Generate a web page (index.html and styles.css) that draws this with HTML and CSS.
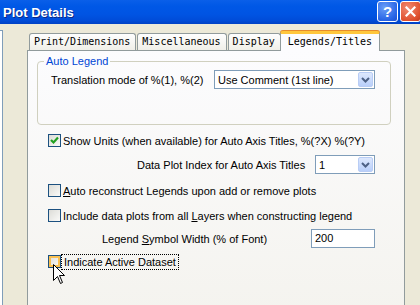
FILE: index.html
```html
<!DOCTYPE html>
<html lang="en">
<head>
  <meta charset="UTF-8" />
  <title>Plot Details</title>
  <link rel="stylesheet" href="styles.css">
</head>
<body>
  <div class="titlebar">
    <span class="title">Plot Details</span>
    <div class="caption-buttons">
      <span class="cap-btn help">?</span>
      <span class="cap-btn close">
        <svg width="11" height="11" viewBox="0 0 11 11"><path d="M1.5 1.5 L9.5 9.5 M9.5 1.5 L1.5 9.5" stroke="#fff" stroke-width="2.2" stroke-linecap="square"/></svg>
      </span>
    </div>
  </div>

  <div class="client">
    <div class="tree"></div>

    <div class="tabbox">
      <div class="tabs">
        <span class="tab">Print/Dimensions</span>
        <span class="tab">Miscellaneous</span>
        <span class="tab">Display</span>
        <span class="tab active">Legends/Titles</span>
      </div>

      <div class="panel">
        <fieldset class="group">
          <legend>Auto Legend</legend>
          <div class="group-row">
            <span>Translation mode of %(1), %(2)</span>
            <div class="combo wide">
              <span class="combo-text">Use Comment (1st line)</span>
              <span class="drop"><svg width="9" height="6" viewBox="0 0 9 6"><path d="M1 1 L4.5 4.5 L8 1" stroke="#4d6185" stroke-width="2" fill="none"/></svg></span>
            </div>
          </div>
        </fieldset>

        <div class="check first">
          <span class="box"><svg width="11" height="11" viewBox="0 0 11 11"><path d="M2 5 L4.5 7.5 L9 2.5" stroke="#21a121" stroke-width="2.2" fill="none"/></svg></span>
          <span>Show Units (when available) for Auto Axis Titles, %(?X) %(?Y)</span>
        </div>

        <div class="field plot-index">
          <span>Data Plot Index for Auto Axis Titles</span>
          <div class="combo small">
            <span class="combo-text">1</span>
            <span class="drop"><svg width="9" height="6" viewBox="0 0 9 6"><path d="M1 1 L4.5 4.5 L8 1" stroke="#4d6185" stroke-width="2" fill="none"/></svg></span>
          </div>
        </div>

        <div class="check reconstruct">
          <span class="box"></span>
          <span><u>A</u>uto reconstruct Legends upon add or remove plots</span>
        </div>

        <div class="check include">
          <span class="box"></span>
          <span>Include data plots from all <u>L</u>ayers when constructing legend</span>
        </div>

        <div class="field symbol-width">
          <span>Legend <u>S</u>ymbol Width (% of Font)</span>
          <div class="edit">200</div>
        </div>

        <div class="check indicate">
          <span class="box hot"></span>
          <span class="focus">Indicate Active Dataset</span>
          <svg class="cursor" width="13" height="21" viewBox="0 0 13 21"><path d="M0.5 0.5 L0.5 16.5 L4.5 12.5 L7.5 19.5 L9.5 18.5 L6.5 11.5 L11.5 11.5 Z" fill="#fff" stroke="#000" stroke-width="1"/></svg>
        </div>
      </div>
    </div>
  </div>
</body>
</html>
```

FILE: styles.css
```css
body {
  margin: 0;
  width: 420px;
  height: 305px;
  overflow: hidden;
  background: #ece9d8;
  font-family: "Liberation Sans", Arial, sans-serif;
  font-size: 11px;
  color: #000;
}
.titlebar {
  height: 24px;
  display: flex;
  align-items: center;
  justify-content: space-between;
  padding-left: 3px;
  background: linear-gradient(#0a5fe9 0%, #0058e6 25%, #0054e3 60%, #004cd8 85%, #0041c4 100%);
}
.title {
  color: #fff;
  font-weight: bold;
  font-size: 13px;
  margin-top: 1px;
  text-shadow: 1px 1px 0 #0a2a8a;
}
.caption-buttons {
  display: flex;
  gap: 2px;
  margin-right: -1px;
  margin-top: -2px;
}
.cap-btn {
  width: 19px;
  height: 19px;
  border: 1px solid #fff;
  border-radius: 3px;
  display: flex;
  align-items: center;
  justify-content: center;
  color: #fff;
  font-weight: bold;
  font-size: 15px;
}
.help {
  background: radial-gradient(circle at 35% 30%, #6b9ff7, #2764e6 70%, #1c50d0);
}
.close {
  background: radial-gradient(circle at 35% 30%, #f08a72, #e0512f 70%, #c23a1c);
}

.client {
  display: flex;
}
.tree {
  width: 2px;
  height: 290px;
  margin-top: 6px;
  background: #fff;
  border-top: 1px solid #7f9db9;
  border-right: 1px solid #7f9db9;
}
.tabbox {
  margin-left: 24px;
  margin-top: 7px;
}
.tabs {
  display: flex;
  align-items: flex-end;
  gap: 1px;
  margin-left: 2px;
  font-family: "DejaVu Sans Mono", monospace;
  font-size: 10px;
}
.tab {
  line-height: 16px;
  padding: 0 5px 0 4px;
  border: 1px solid #919b9c;
  border-bottom: none;
  border-radius: 3px 3px 0 0;
  background: linear-gradient(#fefefe, #f0efe8);
}
.tab.active {
  position: relative;
  z-index: 1;
  margin-left: -2px;
  margin-bottom: -1px;
  padding: 0 7px 1px 7px;
  border-top: 3px solid #ffc73c;
  box-shadow: 0 -1px 0 #e68b2c;
  background: #fcfcfe;
}

.panel {
  width: 376px;
  height: 270px;
  border: 1px solid #919b9c;
  background: linear-gradient(#fcfcfe, #f4f3ee);
  overflow: hidden;
}
.group {
  margin: 4px 13px 0 9px;
  padding: 0 0 0 6px;
  border: 1px solid #d0d0bf;
  border-radius: 4px;
}
.group legend {
  padding: 0 2px;
  color: #0046d5;
  line-height: 13px;
}
.group-row {
  display: flex;
  align-items: center;
  padding: 2px 15px 35px 7px;
}
.combo {
  height: 17px;
  border: 1px solid #7f9db9;
  background: #fff;
  display: flex;
  align-items: center;
  justify-content: space-between;
  margin-left: auto;
}
.combo.wide {
  width: 159px;
}
.combo.small {
  width: 58px;
}
.combo-text {
  padding-left: 3px;
}
.drop {
  width: 15px;
  height: 15px;
  margin-right: 1px;
  border: 1px solid #b9cdf5;
  border-radius: 2px;
  background: linear-gradient(#dde8fd, #b9cffa);
  display: flex;
  align-items: center;
  justify-content: center;
  box-sizing: border-box;
}

.check {
  display: flex;
  align-items: center;
  height: 13px;
  margin-left: 20px;
  gap: 2px;
  position: relative;
}
.check.first { margin-top: 9px; }
.check.reconstruct { margin-top: 10px; }
.check.include { margin-top: 12px; }
.check.indicate { margin-top: 7px; }
.box {
  width: 11px;
  height: 11px;
  border: 1px solid #1c5180;
  background: linear-gradient(135deg, #dcdcd7, #fafaf8);
  display: flex;
  align-items: center;
  justify-content: center;
}
.box.hot {
  width: 9px;
  height: 9px;
  padding: 1px;
  box-shadow: inset 0 0 0 2px #f9c052;
}
.focus {
  outline: 1px dotted #000;
  outline-offset: 1px;
  padding: 0 1px;
}
.cursor {
  position: absolute;
  left: 5px;
  top: 9px;
}

.field {
  display: flex;
  align-items: center;
  height: 19px;
  margin-right: 29px;
}
.plot-index {
  margin-top: 8px;
  padding-left: 109px;
}
.symbol-width {
  margin-top: 7px;
  padding-left: 74px;
}
.edit {
  width: 59px;
  height: 17px;
  line-height: 17px;
  padding-left: 3px;
  border: 1px solid #7f9db9;
  background: #fff;
  margin-left: auto;
}
```
